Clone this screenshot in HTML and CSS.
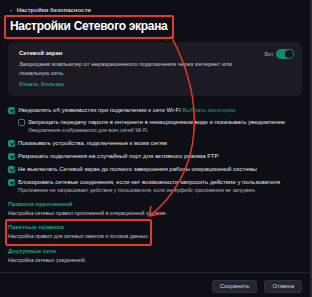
FILE: index.html
```html
<!DOCTYPE html>
<html lang="ru">
<head>
  <meta charset="UTF-8">
  <title>Настройки Сетевого экрана</title>
  <link rel="stylesheet" href="styles.css">
</head>
<body>
  <div class="window">
    <div class="content">
      <div class="crumb"><span class="back">&lsaquo;</span> Настройки безопасности</div>
      <h1 class="title">Настройки Сетевого экрана</h1>

      <section class="card">
        <div class="card-text">
          <div class="card-title">Сетевой экран</div>
          <p class="card-desc">Защищаем компьютер от неразрешенного подключения через интернет или локальную сеть.</p>
          <a class="link">Узнать больше</a>
        </div>
        <div class="switch-wrap">
          <span class="switch-label">Вкл</span>
          <span class="switch"><span class="knob"></span></span>
        </div>
      </section>

      <ul class="options">
        <li class="opt">
          <span class="box on"></span>
          <div>Уведомлять об уязвимостях при подключении к сети Wi-Fi <a class="link plain">Выбрать категории</a></div>
        </li>
        <li class="opt nested">
          <span class="box"></span>
          <div>
            Запрещать передачу пароля в интернете в незащищенном виде и показывать уведомление
            <div class="hint">Уведомления отображаются для всех сетей Wi-Fi.</div>
          </div>
        </li>
        <li class="opt">
          <span class="box on"></span>
          <div>Показывать устройства, подключенные к моим сетям</div>
        </li>
        <li class="opt">
          <span class="box on"></span>
          <div>Разрешать подключения на случайный порт для активного режима FTP</div>
        </li>
        <li class="opt">
          <span class="box on"></span>
          <div>Не выключать Сетевой экран до полного завершения работы операционной системы</div>
        </li>
        <li class="opt">
          <span class="box on"></span>
          <div>
            Блокировать сетевые соединения, если нет возможности запросить действие у пользователя
            <div class="hint">Приложение не запрашивает действие у пользователя, если интерфейс приложения не загружен.</div>
          </div>
        </li>
      </ul>

      <div class="sections">
        <div class="group">
          <a class="link">Правила приложений</a>
          <div class="hint">Настройка сетевых правил приложений в операционной системе.</div>
        </div>
        <div class="group marked">
          <a class="link">Пакетные правила</a>
          <div class="hint">Настройка правил для сетевых пакетов и потоков данных.</div>
        </div>
        <div class="group">
          <a class="link">Доступные сети</a>
          <div class="hint">Настройка сетевых соединений.</div>
        </div>
      </div>
    </div>

    <div class="footer">
      <button class="btn">Сохранить</button>
      <button class="btn">Отмена</button>
    </div>

    <!-- annotation arrow -->
    <svg class="arrow" width="312" height="297" viewBox="0 0 312 297">
      <path d="M171 36 C 205 100, 205 170, 150 216" fill="none" stroke="#e5392c" stroke-width="1.5"/>
      <path d="M151 206 L149 216 L159 214" fill="none" stroke="#e5392c" stroke-width="1.5" stroke-linejoin="round"/>
    </svg>
  </div>
</body>
</html>
```

FILE: styles.css
```css
*{
  box-sizing: border-box;
}
html, body{
  margin: 0;
  padding: 0;
}
body{
  background: #0e0e16;
  color: #e4e4e8;
  font-family: "Liberation Sans", Arial, sans-serif;
  font-size: 6px;
  line-height: 8px;
}
a{
  cursor: pointer;
}
.window{
  position: relative;
  width: 312px;
  height: 297px;
  border-right: 2px solid #2a2a33;
  overflow: hidden;
}
.content{
  padding: 0 8px;
}

.crumb{
  padding: 6px 0 0 2px;
  font-weight: bold;
  color: #cfcfd6;
  height: 14px;
}
.crumb .back{
  margin-right: 3px;
  color: #9a9aa4;
}

.title{
  display: inline-block;
  margin: 1px 0 0 -4px;
  padding: 2px 4px 3px;
  font-size: 12px;
  letter-spacing: -0.3px;
  line-height: 15px;
  font-weight: bold;
  color: #fff;
  border: 2px solid #e5392c;
  border-radius: 2px;
}

.card{
  display: flex;
  justify-content: space-between;
  margin-top: 3px;
  padding: 7px 8px 8px 11px;
  background: #1c1b24;
  border-radius: 6px;
}
.card-title{
  font-weight: bold;
  color: #f0f0f3;
}
.card-desc{
  margin: 3px 0 2px;
  max-width: 215px;
  line-height: 9px;
  color: #c8c8cf;
}
.link{
  color: #15a27c;
  font-weight: bold;
}
.link.plain{
  font-weight: normal;
}
.switch-wrap{
  display: flex;
  align-items: flex-start;
  gap: 3px;
}
.switch-label{
  font-size: 5px;
  line-height: 10px;
  color: #a8a8b0;
}
.switch{
  display: flex;
  align-items: center;
  justify-content: flex-end;
  width: 18px;
  height: 10px;
  padding: 1px;
  border-radius: 5px;
  background: #0f8c6d;
}
.knob{
  width: 8px;
  height: 8px;
  border-radius: 50%;
  background: #15151c;
}

.options{
  list-style: none;
  margin: 10px 0 0;
  padding: 0;
  display: flex;
  flex-direction: column;
  gap: 5px;
}
.opt{
  display: flex;
  gap: 3px;
  align-items: flex-start;
}
.opt.nested{
  margin: -1px 0 0 10px;
}
.box{
  flex: none;
  width: 7px;
  height: 7px;
  margin-top: 0.5px;
  border-radius: 1.5px;
  border: 1px solid #6a6a74;
  position: relative;
}
.box.on{
  background: #139273;
  border-color: #139273;
}
.box.on::after{
  content: '';
  position: absolute;
  left: 1.5px;
  top: 0.3px;
  width: 1.6px;
  height: 3.2px;
  border: solid #0e0e16;
  border-width: 0 1px 1px 0;
  transform: rotate(45deg);
}
.hint{
  font-size: 5.2px;
  line-height: 8px;
  color: #b4b4bc;
}

.sections{
  margin-top: 6px;
  display: flex;
  flex-direction: column;
  gap: 4px;
}
.group .link{
  display: block;
  line-height: 9px;
}
.group .hint{
  line-height: 9px;
  color: #c4c4cc;
  white-space: nowrap;
}
.group.marked{
  margin: -3px 0 -3px -3px;
  padding: 2px 2px 3px 1px;
  width: 147px;
  border: 2px solid #e5392c;
  border-radius: 2px;
}

.footer{
  position: absolute;
  left: 0;
  right: 0;
  bottom: 0;
  height: 25px;
  border-top: 1px solid #24242d;
  display: flex;
  justify-content: flex-end;
  align-items: center;
  gap: 7px;
  padding: 2px 8px 0;
}
.btn{
  height: 13px;
  padding: 0 7px;
  font-family: inherit;
  font-size: 6px;
  color: #d4d4da;
  background: #23262e;
  border: 1px solid #30333c;
  border-radius: 3px;
}

.arrow{
  position: absolute;
  left: 0;
  top: 0;
  pointer-events: none;
}
```
